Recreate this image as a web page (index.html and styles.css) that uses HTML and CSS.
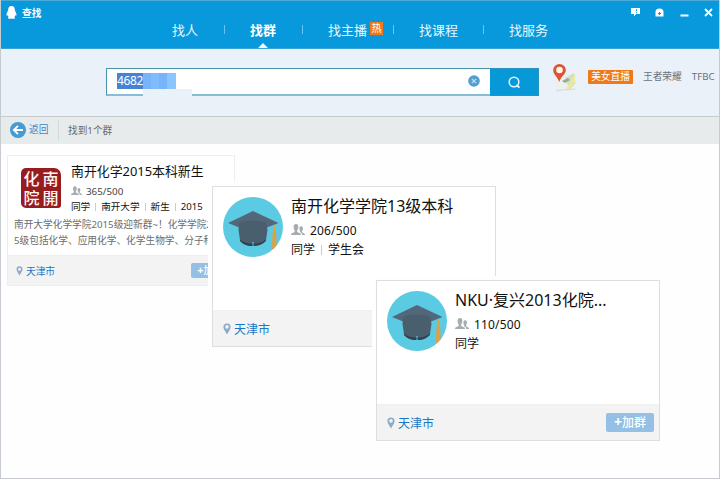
FILE: index.html
```html
<!DOCTYPE html>
<html lang="zh-CN">
<head>
<meta charset="utf-8">
<title>查找</title>
<link rel="stylesheet" href="styles.css">
</head>
<body>
<svg width="0" height="0" class="defs">
  <symbol id="people" viewBox="0 0 14 12"><path d="M5 0C6.800 0 7.600 1.400 7.300 3.500 7.200 5 6.600 5.600 6.200 6.300v1.700L9.400 9.400c.4.200.6.800.6 1.600H0c0-.8.100-1.400.6-1.600l3-1.400V6.300C3.200 5.600 2.700 5 2.600 3.500 2.400 1.400 3.200 0 5 0Z"/><path d="M10.200 2.200c1.500 0 1.900 1.200 1.700 2.800-.1 1-.5 1.500-.8 2v1.200l2.200 1.200c.5.300.7.800.7 1.600h-2.900c0-1.300-.4-1.900-1.200-2.300l-.8-.5V7c-.4-.5-.6-1-.7-2-.1-1.600.3-2.800 1.800-2.800Z"/></symbol>
  <symbol id="pin" viewBox="0 0 8 12"><path fill-rule="evenodd" d="M4 .4A3.600 3.600 0 0 0 .4 4C.4 6.500 3 9 4 11.600 5 9 7.600 6.500 7.600 4A3.600 3.600 0 0 0 4 .4Zm0 1.700a1.800 1.800 0 1 1 0 3.600 1.800 1.800 0 0 1 0-3.600Z"/></symbol>
  <symbol id="cap" viewBox="0 0 60 60">
    <circle cx="30" cy="30" r="30" fill="#5bcbe3"/>
    <path d="M50.800 28h1.200v4l1.200 4 .3 12.500-4.500 4 .5-16 1.300-4.500Z" fill="#dfa040"/>
    <path d="M5 26 30 14 55.500 26 30 36Z" fill="#52687a"/>
    <path d="M16 26.500C20 22.500 40 22.500 43.500 26.500L44.500 33 43 43C40 47 36 49 30.600 49v-4h-1.200v4c-5.400 0-10-2-12.400-6L15.500 33Z" fill="#4a5f6d"/>
    <path d="M17 42.500c3 2.500 7 4 12.400 4V49c-5.400 0-10-2-12.400-5Zm13.600 4c5.400 0 9.400-1.500 12.400-4V44c-3 3-7 5-12.400 5Z" fill="#34424e"/>
  </symbol>
</svg>
<div class="window">
  <header class="header">
    <div class="titlebar">
      <svg class="penguin" width="11" height="13" viewBox="0 0 11 13"><path d="M5.500 0C8 0 9 2 8.900 4.500c1.200 2 1.900 4 1.500 5-.3.400-.8-.1-1-.5-.2 1-.6 1.500-1 2 .8.500.8 1.500-.1 1.700-1 .2-2.100.1-2.800-.3-.7.400-1.800.5-2.800.3-.9-.2-.9-1.200-.1-1.700-.4-.5-.8-1-1-2-.2.400-.7.900-1 .5-.4-1 .3-3 1.500-5C2 2 3 0 5.500 0Z" fill="#fff"/></svg>
      <span class="title">查找</span>
      <div class="controls">
        <svg width="9" height="9" viewBox="0 0 9 9"><path d="M0 0h9v6H5L3 8.500V6H0Z" fill="#fff"/><path d="M5.500 1.200v2M5.500 4.200v1" stroke="#0799db"/></svg>
        <svg width="9" height="9" viewBox="0 0 9 9"><path d="M.5 8.500V4a4 3.500 0 0 1 8 0v4.500Z" fill="#fff"/><path d="M3 5.500h3M4.500 4v3" stroke="#0799db"/></svg>
        <svg width="9" height="9" viewBox="0 0 9 9"><path d="M.5 7.500h8" stroke="#fff" stroke-width="2"/></svg>
        <svg width="9" height="9" viewBox="0 0 9 9"><path d="M1 1l7 7M8 1 1 8" stroke="#fff" stroke-width="1.800"/></svg>
      </div>
    </div>
    <nav class="tabs">
      <a class="tab">找人</a>
      <a class="tab active">找群</a>
      <a class="tab hot">找主播<span class="badge">热</span></a>
      <a class="tab">找课程</a>
      <a class="tab">找服务</a>
    </nav>
  </header>

  <section class="search">
    <div class="field">
      <span class="selected">4682</span>
      <div class="mosaic"><i></i><i></i><i></i><i></i></div>
      <svg class="clear" width="12" height="12" viewBox="0 0 12 12"><circle cx="6" cy="6" r="5.800" fill="#529ed0"/><path d="M3.800 3.800l4.400 4.400M8.200 3.800 3.800 8.200" stroke="#c4e0f2" stroke-width="1.200"/></svg>
    </div>
    <button class="go"><svg width="13" height="13" viewBox="0 0 13 13"><circle cx="6" cy="6" r="4.800" fill="none" stroke="#e8f7ff" stroke-width="1.500"/><path d="M8.500 9l3 2.700" stroke="#e8f7ff" stroke-width="1.800"/></svg></button>
    <svg class="map" width="26" height="30" viewBox="0 0 26 30">
      <path d="M4 16 23 10l1 16-19 2Z" fill="#edf0ee"/><path d="M13 15l9-5 1.500 10-6 7Z" fill="#d3dfc4"/>
      <path d="M23 11v7l-5.500 8.500H14Z" fill="#eee99a"/><path d="M10 18l6-3 2 2-5 3Z" fill="#8fae92"/><path d="M4 27.500l19-1.500" stroke="#d4d8d6"/>
      <path d="M7.500 1A6.300 6.300 0 0 0 1.200 7.300C1.200 11.500 5 13 7.300 19 9 13 13.800 11.500 13.800 7.300A6.300 6.300 0 0 0 7.500 1Z" fill="#df5430"/><circle cx="7.500" cy="7" r="3.300" fill="#fff5ed"/>
    </svg>
    <span class="promo">美女直播</span>
    <span class="word">王者荣耀</span>
    <span class="word last">TFBC</span>
  </section>

  <section class="resultbar">
    <svg width="16" height="16" viewBox="0 0 16 16"><circle cx="8" cy="8" r="8" fill="#469bd3"/><path d="M13 8H4M8 3.800 3.800 8 8 12.200" fill="none" stroke="#fff" stroke-width="1.800"/></svg>
    <a class="back">返回</a>
    <span class="count">找到1个群</span>
  </section>

  <main class="results">
    <article class="card small">
      <div class="info">
        <div class="seal"><span>化</span><span>南</span><span>院</span><span>開</span></div>
        <div class="meta">
          <h2>南开化学2015本科新生</h2>
          <p class="members"><svg width="11" height="10"><use href="#people"/></svg>365/500</p>
          <p class="tags"><span>同学</span><span>南开大学</span><span>新生</span><span>2015</span><span></span></p>
        </div>
      </div>
      <p class="desc">南开大学化学学院2015级迎新群~！化学学院201<br>5级包括化学、应用化学、化学生物学、分子科学</p>
      <footer><svg class="pin" width="7" height="10"><use href="#pin"/></svg><span>天津市</span><button class="join"><b>+</b>加群</button></footer>
    </article>

    <div class="layer second">
      <article class="card">
        <div class="info">
          <svg class="avatar" width="60" height="60"><use href="#cap"/></svg>
          <div class="meta">
            <h2>南开化学学院13级本科</h2>
            <p class="members"><svg width="14" height="12"><use href="#people"/></svg>206/500</p>
            <p class="tags"><span>同学</span><span>学生会</span></p>
          </div>
        </div>
        <footer><svg class="pin" width="8" height="12"><use href="#pin"/></svg><span>天津市</span></footer>
      </article>
    </div>

    <div class="layer third">
      <article class="card">
        <div class="info">
          <svg class="avatar" width="60" height="60"><use href="#cap"/></svg>
          <div class="meta">
            <h2>NKU·复兴2013化院...</h2>
            <p class="members"><svg width="14" height="12"><use href="#people"/></svg>110/500</p>
            <p class="tags"><span>同学</span></p>
          </div>
        </div>
        <footer><svg class="pin" width="8" height="12"><use href="#pin"/></svg><span>天津市</span><button class="join"><b>+</b>加群</button></footer>
      </article>
    </div>
  </main>
</div>
</body>
</html>
```
FILE: styles.css
```css
* { box-sizing: border-box; }
body {
  margin: 0;
  font-family: "Noto Sans", "Noto Sans CJK SC", sans-serif;
  font-size: 12px;
  color: #111;
}
h2, p { margin: 0; font-weight: 400; }
button { border: 0; padding: 0; font: inherit; }
svg { display: block; flex: none; }
.defs { position: absolute; }

.window {
  position: relative;
  width: 720px;
  height: 479px;
  overflow: hidden;
  display: flex;
  flex-direction: column;
  background: #fefefe;
  border: 1px solid #c5cbd0;
  border-top: 0;
}

.header {
  height: 49px;
  background: #0799db;
  border-top: 1px solid #4fa9d5;
  border-bottom: 1px solid #3aa5d4;
}
.titlebar { display: flex; height: 19px; padding: 5px 6px 0 5px; }
.title { margin-left: 5px; font-size: 9.700px; line-height: 15px; color: #fff; font-weight: 700; }
.controls { display: flex; gap: 15.500px; margin: 2px 0 0 auto; }

.tabs { display: flex; padding-left: 171px; height: 28px; font-size: 13px; line-height: 20px; color: #e8f7ff; }
.tab { position: relative; width: 78px; height: 28px; white-space: nowrap; }
.tab::after { content: ""; position: absolute; right: 25px; top: 5px; height: 9px; width: 1px; background: #6fc4ea; }
.tab:last-child::after { display: none; }
.tab.active { font-weight: 700; color: #fff; }
.tab.active::before {
  content: ""; position: absolute; left: 8px; bottom: 0;
  border: 5px solid transparent; border-top: 0; border-bottom-color: #eff6fb;
}
.tab.hot { width: 91px; }
.tab.hot ~ .tab { width: 90px; }
.badge {
  position: absolute; left: 42px; top: 2px; width: 13px; height: 13px;
  background: #ef791d; color: #fff; font-size: 10px; line-height: 13px; text-align: center;
}

.search { display: flex; height: 68px; padding-left: 105px; padding-top: 19px; background: #ebf1f8; border-bottom: 1px solid #c5ccce; }
.field { display: flex; width: 384px; height: 28px; background: #fff; border: 1px solid #4894ad; border-bottom: 2px solid #85bed5; border-right: 0; position: relative; }
.selected { margin: 4px 0 0 10px; width: 26px; height: 16px; background: #4583d7; color: #fff; font-size: 12px; line-height: 16px; letter-spacing: -.4px; }
.mosaic { display: flex; height: 16px; margin-top: 4px; }
.mosaic i { width: 8px; background: #78b4fa; }
.mosaic i:nth-child(2) { background: #80bbfd; }
.mosaic i:nth-child(4) { width: 9px; background: #8cc4ff; }
.mosaic::after { content: ""; position: absolute; left: 36px; top: 20px; width: 49px; height: 8px; background: #e8f3f9; }
.clear { margin: 6px 10px 0 auto; }
.go { width: 49px; height: 28px; background: #0799d7; display: flex; align-items: center; justify-content: center; border: 1px solid #2b91be; border-left: 0; }
.map { margin: -5px 0 0 13px; }
.promo { margin: 2px 10px 0 10px; width: 45px; height: 14px; background: #ee7a19; color: #fff; font-size: 9.700px; line-height: 13px; text-align: center; border-radius: 1px; white-space: nowrap; }
.word { margin-top: 2px; margin-right: 10px; font-size: 9.700px; line-height: 14px; color: #6a7278; white-space: nowrap; }
.word.last { margin-right: 0; }

.resultbar { display: flex; align-items: center; height: 27px; padding-left: 9px; background: #e7ebeb; font-size: 9.700px; color: #646b70; border-bottom: 1px solid #e7ebef; }
.back { margin-left: 3px; width: 30px; line-height: 20px; color: #368bce; border-right: 1px solid #d2d8da; }
.count { margin-left: 9px; }

.results { flex: 1; padding: 11px 0 0 6px; }
.card { display: flex; flex-direction: column; width: 284px; height: 161px; background: #fff; border: 1px solid #dcdfe1; }
.info { display: flex; flex: 1; padding: 10px 0 0 10px; }
.meta { margin-left: 8px; white-space: nowrap; }
.meta h2 { font-size: 16px; line-height: 18px; }
.members { display: flex; align-items: center; height: 20px; margin-top: 5px; font-size: 12px; letter-spacing: .15px; }
.members svg { margin-right: 5px; fill: #a5adb0; }
.tags { display: flex; line-height: 19px; font-size: 12px; }
.tags span + span::before { content: ""; display: inline-block; width: 1px; height: 10px; margin: 0 6px; background: #ccc; vertical-align: -1px; }
.card footer { display: flex; align-items: center; height: 36px; padding: 0 5px 0 10px; background: #f3f3f3; border-top: 1px solid #eeefef; color: #1878c4; }
.pin { margin-right: 3px; fill: #8daacb; }
.join { margin-left: auto; width: 48px; height: 19px; background: #93c0e4; color: #fff; border-radius: 2px; font-size: 12px; line-height: 19px; font-weight: 500; }
.join b { font-size: 14px; line-height: 10px; }

.small { width: 228px; height: 131px; border-color: #eceff1; }
.small .info { flex: none; height: 61px; padding: 7px 0 0 13px; }
.small .meta { margin-left: 10px; }
.small h2 { font-size: 12.900px; line-height: 17px; }
.small .members { height: 16px; margin-top: 3px; font-size: 9.800px; letter-spacing: 0; color: #444; }
.small .members svg { margin-right: 4px; }
.small .tags { font-size: 9.600px; line-height: 15px; }
.small .tags span + span::before { height: 8px; margin: 0 5px; }
.small .desc { height: 38px; padding-left: 6px; font-size: 9.700px; line-height: 16px; color: #686d70; white-space: nowrap; overflow: hidden; }
.small footer { height: 30px; padding-left: 8px; font-size: 9.700px; }
.small .join { width: 38px; height: 15px; font-size: 9.700px; line-height: 14px; }
.small .join b { font-size: 11px; }
.seal { display: grid; grid-template-columns: 19px 19px; grid-template-rows: 19px 19px; width: 40px; height: 40px; margin-top: 5px; padding: 1px; background: #971c20; border-radius: 5px 7px 3px 5px; color: #fff6f3; font: 500 16px/18px "Noto Sans CJK TC", sans-serif; text-align: center; }

.layer { position: absolute; background: #fefefe; padding: 4px; }
.second { left: 207px; top: 182px; }
.third { left: 371px; top: 276px; }
```
